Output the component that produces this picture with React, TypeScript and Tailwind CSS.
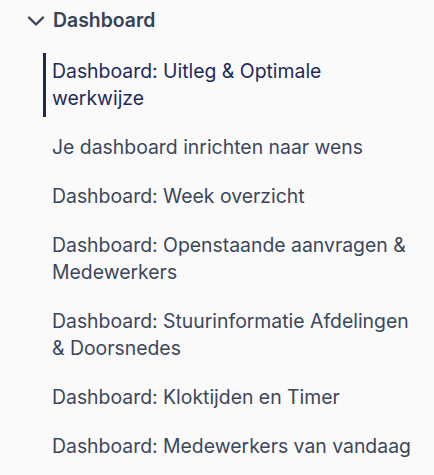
import React from "react";
import { ChevronDown } from "lucide-react";

const articles = [
  { title: "Dashboard: Uitleg & Optimale werkwijze", active: true },
  { title: "Je dashboard inrichten naar wens" },
  { title: "Dashboard: Week overzicht" },
  { title: "Dashboard: Openstaande aanvragen & Medewerkers" },
  { title: "Dashboard: Stuurinformatie Afdelingen & Doorsnedes" },
  { title: "Dashboard: Kloktijden en Timer" },
  { title: "Dashboard: Medewerkers van vandaag" },
];

export default function App() {
  return (
    <div className="min-h-screen w-full bg-[#fafafa] font-['Inter',sans-serif]">
      <nav className="pt-[5px] pr-[18px]">
        {/* Section toggle */}
        <button className="ml-[22px] flex items-center gap-[3px] text-[19.4px] leading-[27px] font-semibold text-[#364256]">
          <ChevronDown className="w-[28px] h-[28px] mt-[2px]" strokeWidth={2} />
          Dashboard
        </button>

        {/* Article list */}
        <ul className="mt-[18px] ml-[43px] flex flex-col gap-[12px]">
          {articles.map((a) => (
            <li
              key={a.title}
              className={`border-l-[3px] pl-[6px] py-[5px] text-[19.4px] leading-[27px] ${
                a.active
                  ? "border-[#1e2a52] text-[#1e2a5a]"
                  : "border-transparent text-[#3b475b]"
              }`}
            >
              <a href="#">{a.title}</a>
            </li>
          ))}
        </ul>
      </nav>
    </div>
  );
}
